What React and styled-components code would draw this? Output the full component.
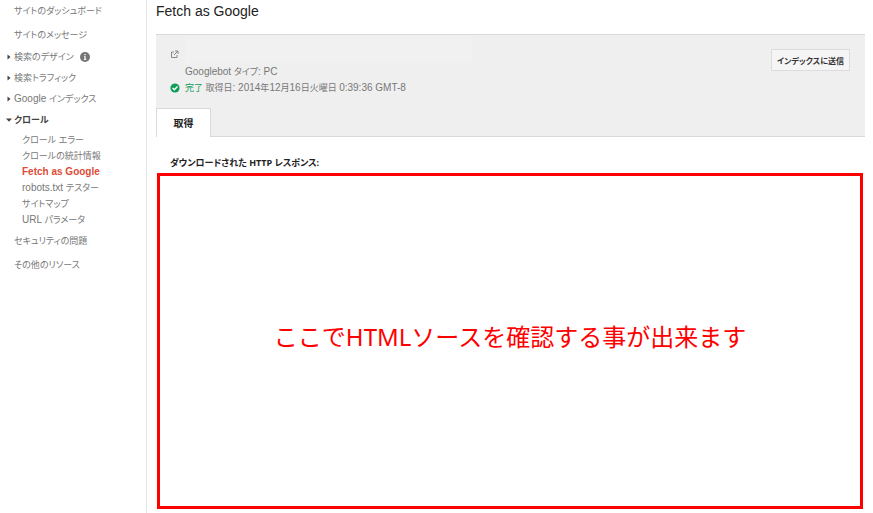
import styled, { createGlobalStyle } from 'styled-components'

const GlobalStyle = createGlobalStyle`
    body {
        margin: 0;
        background-color: #fff;
        font-family: "Liberation Sans", "Noto Sans CJK JP", sans-serif;
        font-size: 9px;
        font-feature-settings: "palt";
        color: #777;
    }
    * {
        box-sizing: border-box;
    }
`

const Page = styled.div`
    display: flex;
    min-height: 100vh;
`

const Sidebar = styled.nav`
    flex: 0 0 147px;
    margin-top: -2px;
    border-right: solid 1px #e5e5e5;
`

const Menu = styled.ul`
    list-style: none;
    margin: 0;
    padding: 0;
`

const SubMenu = styled(Menu)`
    padding: 1px 0;
`

const MenuLink = styled.a`
    display: flex;
    align-items: center;
    height: 24px;
    padding-left: 14px;
    color: #777;
    text-decoration: none;
    white-space: nowrap;
    ${props => props.$group && `
        height: 21px;
        padding-left: 6px;
    `}
    ${props => props.$open && `
        color: #444;
        font-weight: bold;
    `}
    ${props => props.$sub && `
        height: 16px;
        padding-left: 22px;
    `}
    ${props => props.$selected && `
        color: #dd4b39;
        font-weight: bold;
    `}
`

const Latin = styled.span`
    font-size: 10px;
`

const Arrow = styled.svg`
    width: 6px;
    height: 6px;
    margin-right: 2px;
    fill: #444;
`

const InfoIcon = styled.svg`
    width: 10px;
    height: 10px;
    margin-left: 6px;
`

const Main = styled.main`
    flex: 1;
    display: flex;
    flex-direction: column;
    min-width: 0;
    padding: 0 8px 4px 9px;
`

const Title = styled.h1`
    margin: 0;
    height: 34px;
    font-size: 14px;
    line-height: 22px;
    font-weight: normal;
    color: #222;
`

const Panel = styled.section`
    display: flex;
    flex-direction: column;
    justify-content: space-between;
    height: 103px;
    background-color: #efefef;
    border-top: solid 1px #d9d9d9;
    border-bottom: solid 1px #d9d9d9;
`

const PanelTop = styled.div`
    display: flex;
    justify-content: space-between;
    align-items: flex-start;
    padding: 2px 15px 0 14px;
`

const Details = styled.div`
    display: grid;
    grid-template-columns: 10px 287px;
    grid-template-rows: 27px 16px 16px;
    align-items: center;
    column-gap: 5px;
    white-space: nowrap;
`

const UrlField = styled.div`
    height: 24px;
    background-color: #f1f1f1;
`

const DetailText = styled.span`
    grid-column: 2;
    line-height: 14px;
`

const Status = styled.span`
    color: #0f9d58;
`

const UrlLink = styled.a`
    display: flex;
    padding-top: 8px;
`

const SubmitButton = styled.button`
    height: 22px;
    margin-top: 12px;
    padding: 0 5px;
    border: solid 1px #dcdcdc;
    background-color: #f5f5f5;
    color: #333;
    font: inherit;
    font-feature-settings: inherit;
    font-weight: bold;
    font-size: 8px;
    min-width: 79px;
    white-space: nowrap;
`

const Tabs = styled.div`
    display: flex;
    margin-bottom: -1px;
`

const Tab = styled.button`
    width: 55px;
    height: 29px;
    padding: 0 0 2px;
    border: solid 1px #d9d9d9;
    border-bottom: 0;
    background-color: #fff;
    color: #222;
    font: inherit;
    font-size: 10px;
    font-weight: bold;
`

const ResponseTitle = styled.h2`
    margin: 0;
    padding: 15px 0 0 14px;
    height: 36px;
    font-family: "Open Sans", "Noto Sans CJK JP", sans-serif;
    font-size: 9px;
    line-height: 22px;
    color: #222;
`

const ResponseBox = styled.div`
    flex: 1;
    display: flex;
    align-items: center;
    justify-content: center;
    margin: 0 2px 0 1px;
    padding-bottom: 12px;
    border: solid 3px #f00;
    color: #f00;
    font-family: "Noto Sans", "Noto Sans CJK JP", sans-serif;
    font-size: 24px;
    font-feature-settings: normal;
`

const menu = [
    { label: 'サイトのダッシュボード' },
    { label: 'サイトのメッセージ' },
    { label: '検索のデザイン', group: true, info: true },
    { label: '検索トラフィック', group: true },
    { label: 'Google インデックス', group: true },
    {
        label: 'クロール',
        group: true,
        items: [
            'クロール エラー',
            'クロールの統計情報',
            'Fetch as Google',
            'robots.txt テスター',
            'サイトマップ',
            'URL パラメータ',
        ],
    },
    { label: 'セキュリティの問題' },
    { label: 'その他のリソース' },
]

// latin runs are set one pixel larger than the kana around them
const Label = ({ text }) => (
    <span>
        {text.split(/([!-~][ -~]*)/).map((part, i) => (
            i % 2 ? <Latin key={i}>{part}</Latin> : part
        ))}
    </span>
)

const MenuItem = ({ label, group, info, items }) => (
    <li>
        <MenuLink href="#" $group={group} $open={!!items}>
            {group && (
                <Arrow viewBox="0 0 6 6">
                    <path d={items ? 'M0 1.5h6L3 4.8z' : 'M1.5 0.5v5L4.5 3z'} />
                </Arrow>
            )}
            <Label text={label} />
            {info && (
                <InfoIcon viewBox="0 0 10 10">
                    <circle cx="5" cy="5" r="5" fill="#757575" />
                    <path d="M4 4.2h1.7v3h.6v.8H3.8v-.8h.6V5H4zM4.3 1.9h1.4v1.4H4.3z" fill="#fff" />
                </InfoIcon>
            )}
        </MenuLink>
        {items && (
            <SubMenu>
                {items.map(item => (
                    <li key={item}>
                        <MenuLink href="#" $sub $selected={item === 'Fetch as Google'}>
                            <Label text={item} />
                        </MenuLink>
                    </li>
                ))}
            </SubMenu>
        )}
    </li>
)

const App = () => (
    <>
        <GlobalStyle />
        <Page>
            <Sidebar>
                <Menu>
                    {menu.map(item => <MenuItem key={item.label} {...item} />)}
                </Menu>
            </Sidebar>
            <Main>
                <Title>Fetch as Google</Title>
                <Panel>
                    <PanelTop>
                        <Details>
                            <UrlLink href="#" aria-label="URL">
                                <svg width="9" height="9" viewBox="0 0 9 9" fill="none" stroke="#888">
                                    <path d="M4 2H1.5v5.5H7V5M5 1h3v3M8 1L4 5" />
                                </svg>
                            </UrlLink>
                            <UrlField />
                            <DetailText><Label text="Googlebot タイプ: PC" /></DetailText>
                            <svg width="10" height="10" viewBox="0 0 10 10">
                                <circle cx="5" cy="5" r="4.6" fill="#0f9d58" />
                                <path d="M2.6 5.1l1.7 1.7 3.2-3.4" fill="none" stroke="#fff" strokeWidth="1.4" />
                            </svg>
                            <DetailText>
                                <Status>完了</Status> <Label text="取得日: 2014年12月16日火曜日 0:39:36 GMT-8" />
                            </DetailText>
                        </Details>
                        <SubmitButton type="button">インデックスに送信</SubmitButton>
                    </PanelTop>
                    <Tabs>
                        <Tab type="button">取得</Tab>
                    </Tabs>
                </Panel>
                <ResponseTitle>ダウンロードされた HTTP レスポンス:</ResponseTitle>
                <ResponseBox>ここでHTMLソースを確認する事が出来ます</ResponseBox>
            </Main>
        </Page>
    </>
)

export default App
